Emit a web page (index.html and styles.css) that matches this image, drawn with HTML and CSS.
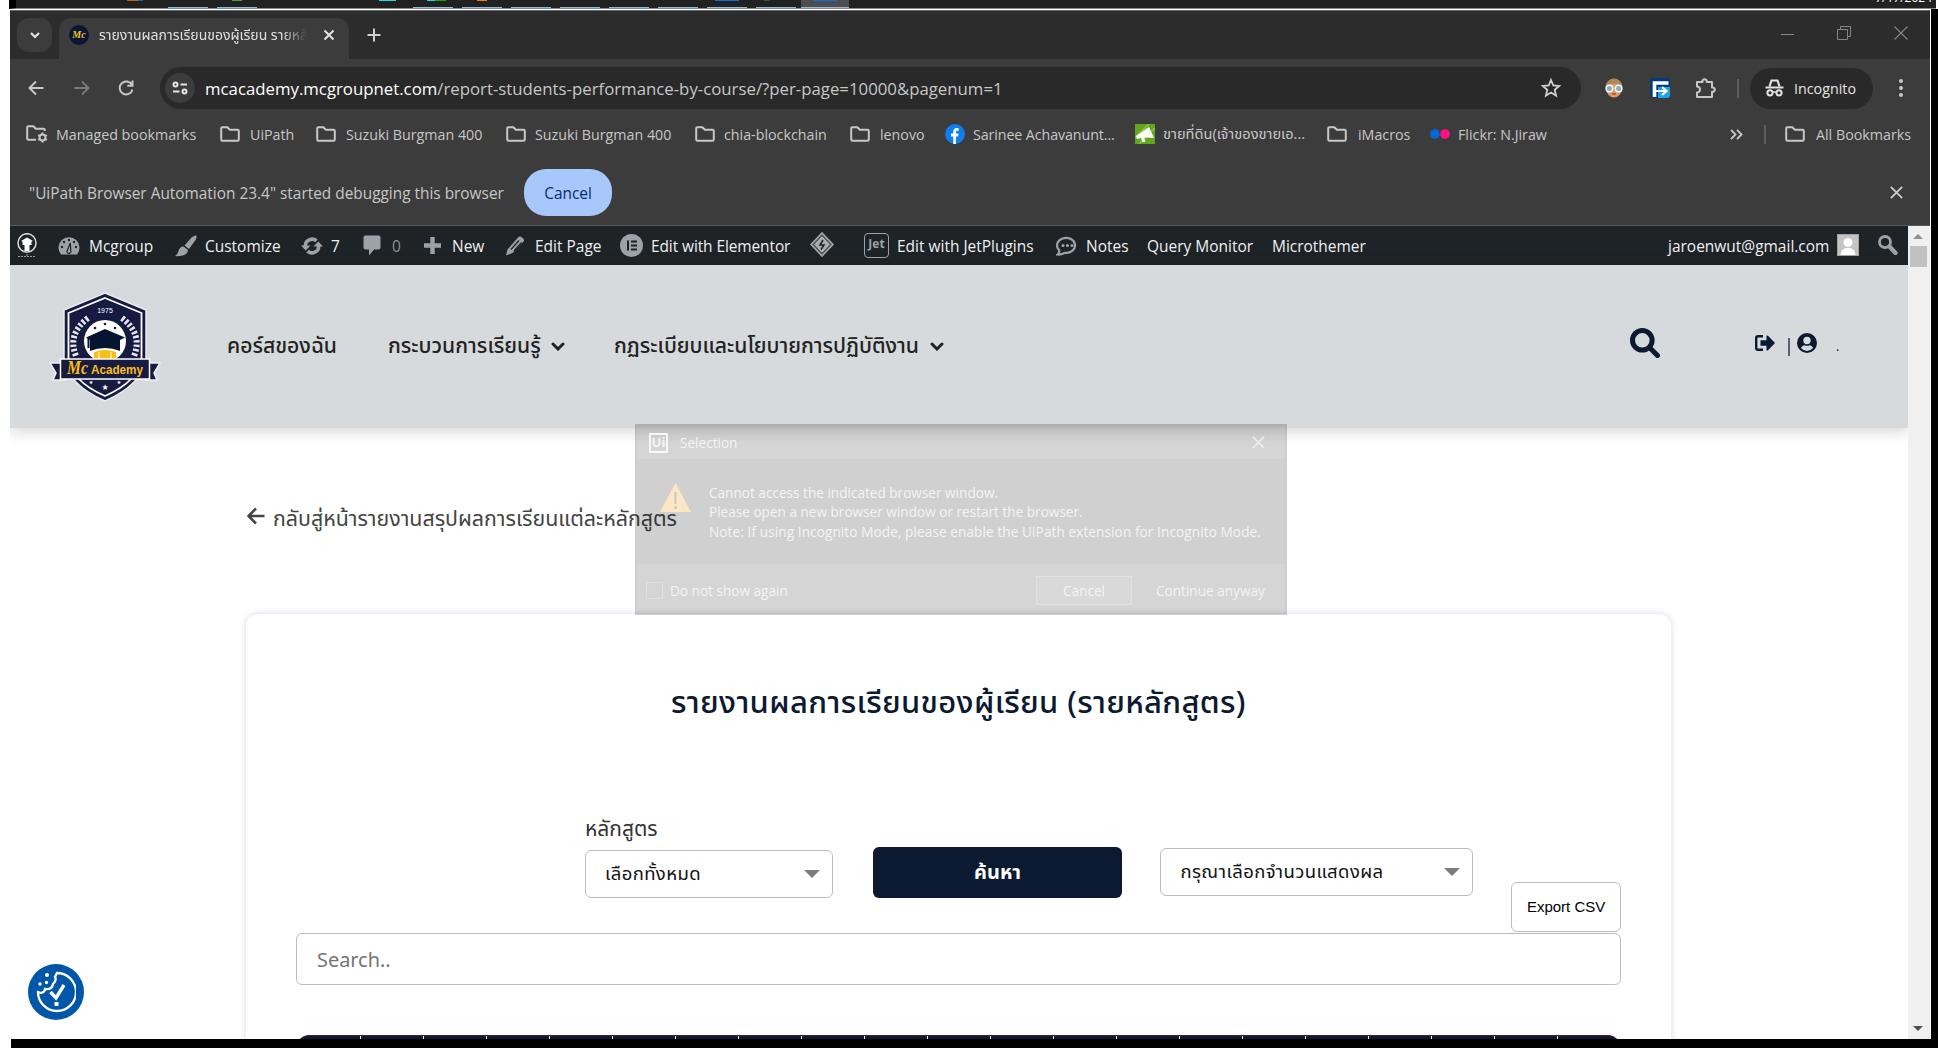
FILE: index.html
```
<!DOCTYPE html>
<html lang="th">
<head>
<meta charset="utf-8">
<title>รายงานผลการเรียนของผู้เรียน</title>
<link rel="stylesheet" href="styles.css">
</head>
<body>
<svg class="defs" width="0" height="0">
  <symbol id="folder" viewBox="0 0 20 16"><path d="M1.2 13.2V2.2Q1.2 1.2 2.2 1.2H7.4L9.8 3.8H17.6Q18.8 3.8 18.8 5V13.4Q18.8 14.8 17.6 14.8H2.4Q1.2 14.8 1.2 13.2Z" fill="none" stroke="#c7c7c7" stroke-width="2"/></symbol>
  <symbol id="caret" viewBox="0 0 14 9"><path d="M2 2 7 7l5-5" fill="none" stroke="#222" stroke-width="3" stroke-linecap="round"/></symbol>
</svg>
<div class="screen">
  <div class="taskbar">
    <i class="task" style="left:111px;width:11px;background:#b26b0c"></i><i class="task" style="left:122px;width:5px;background:#1a62b8"></i>
    <i class="task" style="left:216px;width:10px;background:#45a043"></i>
    <i class="task" style="left:363px;width:17px;background:#26d6e0"></i>
    <i class="task" style="left:411px;width:8px;background:#26d6e0"></i><i class="task" style="left:419px;width:11px;background:#16a516"></i>
    <i class="task" style="left:461px;width:10px;background:#ef7d16"></i>
    <i class="open" style="left:152px"></i><i class="open" style="left:201px"></i><i class="open" style="left:397px"></i><i class="open" style="left:446px"></i><i class="open" style="left:495px"></i><i class="open" style="left:544px"></i><i class="open" style="left:593px"></i><i class="open" style="left:642px"></i><i class="open" style="left:691px"></i><i class="open" style="left:740px"></i>
    <i class="open active" style="left:785px"></i>
    <i class="task" style="left:699px;width:24px;background:#0c6fe0"></i><i class="task" style="left:748px;width:6px;background:#2a5a2a"></i><i class="task" style="left:797px;width:24px;background:#0c6fe0"></i>
    <span class="date">7/17/2024</span>
  </div>
  <div class="main">
    <div class="window">
      <div class="tabs">
        <div class="tabmenu"><svg width="12" height="8" viewBox="0 0 12 8"><path d="M2 2l4 4 4-4" fill="none" stroke="#e3e3e3" stroke-width="2.200"/></svg></div>
        <div class="tab">
          <span class="fav"><b>Mc</b></span>
          <span class="tabtitle">รายงานผลการเรียนของผู้เรียน รายหลั</span>
          <svg width="12" height="12" viewBox="0 0 12 12"><path d="M1.500 1.500l9 9m0-9l-9 9" stroke="#e3e3e3" stroke-width="2"/></svg>
        </div>
        <svg class="plus" width="14" height="14" viewBox="0 0 14 14"><path d="M7 0.500v13M.5 7h13" stroke="#d0d0d0" stroke-width="2"/></svg>
        <div class="winctl">
          <svg width="14" height="14" viewBox="0 0 14 14"><path d="M1 8.500h13" stroke="#858585"/></svg>
          <svg width="14" height="14" viewBox="0 0 14 14"><path d="M.5 3.500h10v10h-10zM3.500 3V.5h10v10h-2.500" fill="none" stroke="#858585"/></svg>
          <svg width="14" height="14" viewBox="0 0 14 14"><path d="M.5.5l13 13m0-13l-13 13" stroke="#858585" stroke-width="1.100"/></svg>
        </div>
      </div>
      <div class="toolbar">
        <svg width="16" height="16" viewBox="0 0 16 16"><path d="M15.500 8H2M8 1.500 1.500 8 8 14.500" fill="none" stroke="#c7c7c7" stroke-width="2"/></svg>
        <svg width="16" height="16" viewBox="0 0 16 16"><path d="M.5 8H14M8 1.500 14.500 8 8 14.500" fill="none" stroke="#7c7c7c" stroke-width="1.800"/></svg>
        <svg width="16" height="16" viewBox="0 0 16 16"><path d="M14 5A6.500 6.500 0 1 0 14.500 9.500M14.500 0.500V5.800H9.300" fill="none" stroke="#c7c7c7" stroke-width="2"/></svg>
        <div class="omni">
          <span class="info"><svg width="16" height="14" viewBox="0 0 16 14"><g fill="none" stroke="#e3e3e3" stroke-width="2"><circle cx="3.500" cy="3.500" r="2"/><path d="M8.500 3.500H15M1 10.500h6.500"/><circle cx="12.500" cy="10.500" r="2"/></g></svg></span>
          <span class="url"><span class="host">mcacademy.mcgroupnet.com</span>/report-students-performance-by-course/?per-page=10000&amp;pagenum=1</span>
          <svg class="star" width="20" height="20" viewBox="0 0 20 20"><path d="M10 2l2.300 5.500 5.900.5-4.500 3.900 1.400 5.800L10 14.600l-5.100 3.100 1.400-5.800L1.800 8l5.900-.5z" fill="none" stroke="#d0d0d0" stroke-width="1.800"/></svg>
        </div>
        <svg width="20" height="20" viewBox="0 0 20 20"><ellipse cx="10" cy="10" rx="8" ry="9.500" fill="#dd9a6c"/><path d="M1.500 8A8.600 8.600 0 0 1 18.500 8Q13 5 10 6 7 5 1.500 8Z" fill="#ad8b56"/><circle cx="5.400" cy="10.500" r="3.300" fill="#7cb4bf" stroke="#f4f4f4" stroke-width="1.600"/><circle cx="14.600" cy="10.500" r="3.300" fill="#7cb4bf" stroke="#f4f4f4" stroke-width="1.600"/><path d="M8 16h4" stroke="#b5473c" stroke-width="1.500"/></svg>
        <svg width="20" height="20" viewBox="0 0 20 20"><rect width="20" height="20" rx="3" fill="#063a7a"/><path d="M8 9h12v8q0 3-3 3H8z" fill="#1da5ea"/><path d="M4.500 19V5h14" fill="none" stroke="#fff" stroke-width="3.600"/><path d="M6 13h9M12 9l4.500 4-4.500 4" fill="none" stroke="#fff" stroke-width="2.200"/></svg>
        <svg width="21" height="21" viewBox="0 0 21 21"><path d="M2 4h5.500a2.200 2.200 0 1 1 4.200 0H17v5.500a2.200 2.200 0 1 1 0 4.200V19H2v-4.500c4-.3 4-5.700 0-6z" fill="none" stroke="#c7c7c7" stroke-width="2" stroke-linejoin="round"/></svg>
        <i class="vr"></i>
        <div class="incog"><svg width="19" height="18" viewBox="0 0 19 18"><path d="M0.500 8.500h18" stroke="#e3e3e3" stroke-width="2"/><path d="M4.500 7.500 6.500 1.500h6l2 6" fill="none" stroke="#e3e3e3" stroke-width="2.200"/><circle cx="5" cy="13.800" r="2.600" fill="none" stroke="#e3e3e3" stroke-width="2"/><circle cx="14" cy="13.800" r="2.600" fill="none" stroke="#e3e3e3" stroke-width="2"/><path d="M7.500 13h4" stroke="#e3e3e3" stroke-width="1.500"/></svg><span>Incognito</span></div>
        <svg width="4" height="18" viewBox="0 0 4 18"><g fill="#c7c7c7"><circle cx="2" cy="2" r="2"/><circle cx="2" cy="9" r="2"/><circle cx="2" cy="16" r="2"/></g></svg>
      </div>
      <div class="bookmarks">
        <svg width="22" height="18" viewBox="0 0 22 18"><path d="M10 14.800H2.500Q1.200 14.800 1.200 13.500V2.200Q1.200 1.200 2.200 1.200H7.400L9.800 3.800H17.600Q18.800 3.800 18.800 6" fill="none" stroke="#c7c7c7" stroke-width="2"/><circle cx="16.500" cy="12.500" r="3" fill="none" stroke="#c7c7c7" stroke-width="2"/><path d="M16.500 7.500v2M16.500 15.500v2M12.200 10l1.700 1M19.100 14l1.700 1M12.200 15l1.700-1M19.100 11l1.700-1" stroke="#c7c7c7" stroke-width="2"/></svg><span>Managed bookmarks</span>
        <svg class="f"><use href="#folder"/></svg><span>UiPath</span>
        <svg class="f"><use href="#folder"/></svg><span>Suzuki Burgman 400</span>
        <svg class="f"><use href="#folder"/></svg><span>Suzuki Burgman 400</span>
        <svg class="f"><use href="#folder"/></svg><span>chia-blockchain</span>
        <svg class="f"><use href="#folder"/></svg><span>lenovo</span>
        <svg width="20" height="20" viewBox="0 0 20 20"><circle cx="10" cy="10" r="10" fill="#0f7ff0"/><path d="M8.300 20V12.500H6V9.600h2.300V7.600Q8.300 4 11.700 4q1.300 0 2 .2v2.500h-1.400q-1.300 0-1.300 1.400v1.500h2.600l-.5 2.900H11V20z" fill="#fff"/></svg><span class="tight">Sarinee Achavanunt...</span>
        <svg width="20" height="20" viewBox="0 0 20 20"><rect width="20" height="20" fill="#62a61f"/><path d="M0 14 14 0M4 20 20 4" stroke="#7fbf3c" stroke-width="2"/><path d="M14 3l5 11-7-.5-3 .3 1.500 4-3 .2-1.500-4-4 1-1-3z" fill="#fff"/></svg><span class="th">ขายที่ดิน(เจ้าของขายเอ...</span>
        <svg class="f"><use href="#folder"/></svg><span>iMacros</span>
        <svg width="20" height="10" viewBox="0 0 20 10"><circle cx="5" cy="5" r="4.800" fill="#0666dc"/><circle cx="15" cy="5" r="4.800" fill="#ff1283"/></svg><span>Flickr: N.Jiraw</span>
        <svg width="13" height="11" viewBox="0 0 13 11"><path d="M1 .8 5.500 5.500 1 10.200M7 .8l4.500 4.700L7 10.200" fill="none" stroke="#c7c7c7" stroke-width="1.900"/></svg>
        <i class="vr"></i>
        <svg class="f"><use href="#folder"/></svg><span>All Bookmarks</span>
      </div>
      <div class="infobar"><span>"UiPath Browser Automation 23.4" started debugging this browser</span><button class="cancel">Cancel</button><svg width="13" height="13" viewBox="0 0 13 13"><path d="M.8.8l11.400 11.400m0-11.400L.8 12.200" stroke="#d0d0d0" stroke-width="1.700"/></svg></div>
      <div class="viewport">
        <div class="page">
          <div class="admin">
            <svg width="20" height="26" viewBox="0 0 20 26"><ellipse cx="10" cy="10" rx="9" ry="9.300" fill="none" stroke="#ddd" stroke-width="1.500"/><path d="M4 8l6-3.500L16 8l-1.500.5V12h-2v6h-5v-6h-2V8.500z" fill="#fff"/><path d="M10 18v5M1 23.500h18" stroke="#999" stroke-dasharray="2 1"/></svg>
            <svg width="22" height="20" viewBox="0 0 22 20"><path d="M3 18.500A10.500 10.500 0 1 1 19 18.500Z" fill="#9ca2a7"/><g fill="#1d2327"><circle cx="11" cy="4" r="1.200"/><circle cx="6" cy="6" r="1.200"/><circle cx="4" cy="11" r="1.200"/><circle cx="18" cy="11" r="1.200"/><circle cx="16" cy="6" r="1.200"/></g><path d="M12.300 7 12.800 14.500a2 2 0 1 1-3.300-.5z" fill="none" stroke="#1d2327" stroke-width="1.200"/></svg><span>Mcgroup</span>
            <svg width="22" height="22" viewBox="0 0 22 22"><path d="M21 .5Q22.500 1.500 20.500 5L14 14 9.500 10.500 16.500 2.500Q20 0 21 .5ZM8.500 11.500l4.500 3.500Q12.500 19.500 7.500 20.500 3.500 21.500 0 21 3 19 3.500 16 4.500 11.500 8.500 11.500Z" fill="#9ca2a7"/></svg><span>Customize</span>
            <svg width="22" height="18" viewBox="0 0 22 18"><g fill="none" stroke="#9ca2a7" stroke-width="3.600"><path d="M4.300 9A6.700 6.700 0 0 1 15.500 3.900M17.700 9A6.700 6.700 0 0 1 6.500 14.100"/></g><path d="M0 8.500h9.500L4.700 13.500zM22 9.500h-9.500L17.300 4.500z" fill="#9ca2a7"/></svg><span>7</span>
            <svg width="18" height="21" viewBox="0 0 18 21"><path d="M2.500.5h13q2 0 2 2v10q0 2-2 2H11L6 20.500v-6H2.500q-2 0-2-2v-10q0-2 2-2Z" fill="#9ca2a7"/></svg><span class="dim">0</span>
            <svg width="17" height="17" viewBox="0 0 17 17"><path d="M8.500 0v17M0 8.500h17" stroke="#9ca2a7" stroke-width="4.400"/></svg><span>New</span>
            <svg width="19" height="20" viewBox="0 0 19 20"><path d="M0 19.500 1.500 13.500 12 1.500q2-2 4 0 3 2 1.500 4L6.500 17z" fill="#9ca2a7"/><path d="M5 13.500 13 4.500M8 15l7.500-8.500" stroke="#1d2327" stroke-width="1.200"/></svg><span>Edit Page</span>
            <svg width="23" height="23" viewBox="0 0 23 23"><circle cx="11.500" cy="11.500" r="11.500" fill="#9ca2a7"/><path d="M8 6.500v10M11 7.500h6M11 11.500h6M11 15.500h6" stroke="#1d2327" stroke-width="2"/></svg><span class="tight">Edit with Elementor</span>
            <svg class="up" width="24" height="25" viewBox="0 0 24 25"><path d="M12 1 23 12.500 12 24 1 12.500Z" fill="#555a60" stroke="#a7aaad" stroke-width="1.600"/><path d="M12 5 19 12.500 12 20 5 12.500Z" fill="#a7aaad" stroke="#c3c4c7"/><path d="M13 8l-3 5h4l-3 4.500" fill="none" stroke="#1d2327" stroke-width="1.500"/></svg>
            <span class="jet">Jet</span><span>Edit with JetPlugins</span>
            <svg width="22" height="20" viewBox="0 0 22 20"><path d="M1.500 18.500Q4 16.500 3 14A9 7.500 0 1 1 9 16.800Q5 19 1.500 18.500Z" fill="none" stroke="#9ca2a7" stroke-width="2.200"/><g fill="#9ca2a7"><circle cx="7" cy="9.500" r="1.500"/><circle cx="11.500" cy="9.500" r="1.500"/><circle cx="16" cy="9.500" r="1.500"/></g></svg><span>Notes</span>
            <span>Query Monitor</span><span>Microthemer</span><span>jaroenwut@gmail.com</span>
            <svg class="up" width="22" height="22" viewBox="0 0 22 22"><rect x=".5" y=".5" width="21" height="21" fill="#c3c3c3" stroke="#a2a2a2"/><circle cx="11" cy="8.500" r="4.500" fill="#fff"/><path d="M3.500 21Q4 15 9 14h4q5 1 5.500 7z" fill="#fff"/></svg>
            <svg class="up" width="20" height="20" viewBox="0 0 20 20"><circle cx="7" cy="7" r="5.500" fill="none" stroke="#9ca2a7" stroke-width="2.800"/><path d="M11.500 11.500l6 6.500" stroke="#9ca2a7" stroke-width="4.400" stroke-linecap="round"/></svg>
          </div>
          <div class="header">
            <svg class="crest" width="112" height="110" viewBox="0 0 112 110">
              <path d="M56 1 97 18V66Q94 92 56 109 18 92 15 66V18Z" fill="#171b42" stroke="#e9ecef" stroke-width="1.500"/>
              <path d="M56 6 92.500 21V66Q90 89 56 104 22 89 19.500 66V21Z" fill="none" stroke="#fff" stroke-width="1.800"/>
              <path d="M39 26Q18 42 27 64M73 26Q94 42 85 64" fill="none" stroke="#e8e8ee" stroke-width="6" stroke-dasharray="2.500 2"/>
              <circle cx="56" cy="49" r="21" fill="#fff"/>
              <g fill="#171b42"><circle cx="56" cy="32" r="1.300"/><circle cx="46" cy="36" r="1.300"/><circle cx="66" cy="36" r="1.300"/></g>
              <path d="M45 60Q56 56 67 60V68H45Z" fill="#fbbe12"/><path d="M50 60v8M62 60v8" stroke="#fff"/>
              <path d="M56 37 76 45.500 71 48V59Q56 53 41 59V48L37 45.500Z" fill="#06152f"/><path d="M39.500 46v10" stroke="#06152f" stroke-width="2"/>
              <path d="M1 71H16V88H4L7 81ZM111 71H96V88H108L105 81Z" fill="#171b42" stroke="#eef0f2" stroke-width="1.500"/>
              <rect x="11.500" y="67" width="89" height="20" fill="#171b42" stroke="#fff" stroke-width="1.500"/>
              <text x="56" y="21" class="yr">1975</text><text x="18" y="82" class="mc" textLength="21" lengthAdjust="spacingAndGlyphs">Mc</text><text x="42" y="81.500" class="ac" textLength="52" lengthAdjust="spacingAndGlyphs">Academy</text>
              <text x="56" y="98" class="st">★</text><text x="42" y="92" class="st s">★</text><text x="70" y="92" class="st s">★</text>
            </svg>
            <span>คอร์สของฉัน</span>
            <span>กระบวนการเรียนรู้</span><svg class="c"><use href="#caret"/></svg>
            <span>กฏระเบียบและนโยบายการปฏิบัติงาน</span><svg class="c"><use href="#caret"/></svg>
            <svg class="raise" width="30" height="30" viewBox="0 0 30 30"><circle cx="12.300" cy="12.300" r="9.800" fill="none" stroke="#0b1931" stroke-width="5"/><path d="M19.500 19.500l8 8" stroke="#0b1931" stroke-width="5" stroke-linecap="round"/></svg>
            <svg class="raise" width="20" height="16" viewBox="0 0 20 16"><path d="M8 1.300H3Q1.200 1.300 1.200 3V13Q1.200 14.700 3 14.700H8" fill="none" stroke="#0b1931" stroke-width="2.400"/><path d="M5.500 5.200H11.500V.8Q12 0 13 .8L20 8 13 15.200Q12 16 11.500 15.200V10.800H5.500Z" fill="#0b1931"/></svg>
            <i class="bar"></i>
            <svg class="raise" width="20" height="20" viewBox="0 0 20 20"><circle cx="10" cy="10" r="10" fill="#0b1931"/><circle cx="10" cy="7.500" r="3.700" fill="#d6dadd"/><path d="M3.800 15Q6 12 7.500 12.300q2.500 1 5 0Q14.500 12 16.200 15 10 21 3.800 15Z" fill="#d6dadd"/></svg>
            <span class="dot">.</span>
          </div>
          <div class="back"><svg width="18" height="18" viewBox="0 0 18 18"><path d="M17.500 9H2M9 1.500 1.500 9 9 16.500" fill="none" stroke="#444" stroke-width="2.600"/></svg><span>กลับสู่หน้ารายงานสรุปผลการเรียนแต่ละหลักสูตร</span></div>
          <div class="card">
            <h1>รายงานผลการเรียนของผู้เรียน (รายหลักสูตร)</h1>
            <div class="form">
              <div class="field"><label>หลักสูตร</label><div class="select"><span>เลือกทั้งหมด</span><i></i></div></div>
              <button class="go">ค้นหา</button>
              <div class="select wide"><span>กรุณาเลือกจำนวนแสดงผล</span><i></i></div>
              <button class="csv">Export CSV</button>
            </div>
            <div class="search">Search..</div>
            <div class="thead"></div>
          </div>
          <div class="cookie"><svg width="40" height="44" viewBox="0 0 40 44"><g fill="none" stroke="#fff" stroke-width="2.300"><path d="M21 3A19 19 0 1 1 2 22L5 23Q9 22 9 19 16 20 17 14 21 10 19 7Z"/><path d="M14.500 22l5.500 6 8-13" stroke-width="3.400"/></g><path d="M18.500 32h4v4h-4z" fill="#fff"/><g fill="#fff"><circle cx="11" cy="5" r="2"/><circle cx="4" cy="14" r="1.700"/><circle cx="10.500" cy="12.500" r="1.700"/></g></svg></div>
        </div>
        <div class="scroll"><i class="ua"></i><i class="thumb"></i><i class="da"></i></div>
      </div>
      <div class="dialog">
        <div class="dt"><span class="ui">Ui</span><span>Selection</span><svg width="13" height="13" viewBox="0 0 13 13"><path d="M.8.8l11.400 11.400m0-11.400L.8 12.200" stroke="#f0f0f0" stroke-width="1.400"/></svg></div>
        <div class="db"><svg width="31" height="29" viewBox="0 0 31 29"><path d="M15.500 0 31 29H0Z" fill="#fbe7c4"/><path d="M15.500 9v12M15.500 23v3" stroke="#c9c7c2" stroke-width="2"/></svg><p>Cannot access the indicated browser window.<br>Please open a new browser window or restart the browser.<br><span class="hint">Note: If using Incognito Mode, please enable the UiPath extension for Incognito Mode.</span></p></div>
        <div class="df"><i class="box"></i><span>Do not show again</span><span class="btn">Cancel</span><span>Continue anyway</span></div>
      </div>
    </div>
    <div class="edge"></div>
  </div>
  <div class="bottom"></div>
</div>
</body>
</html>
```
FILE: styles.css
```
* { box-sizing: border-box; }
body { margin: 0; background: #fff; font-family: "Open Sans", "Noto Sans Thai", "Noto Sans", sans-serif; }
svg { display: block; flex: none; }
button { font: inherit; border: 0; padding: 0; }
span { white-space: nowrap; }
.defs { position: absolute; }
.screen { width: 1938px; height: 1048px; overflow: hidden; display: flex; flex-direction: column; }
.taskbar { position: relative; height: 9px; margin-left: 9px; margin-right: 2px; border-left: 7px solid #000; background: #212121; border-bottom: 1px solid #8a8a8a; overflow: hidden; flex: none; }
.task, .open { position: absolute; top: 0; height: 1px; }
.open { top: 7px; width: 40px; background: #8dbbe2; }
.open.active { top: 0; width: 48px; height: 8px; background: #4d4d4d; border-bottom: 1px solid #8dbbe2; }
.date { position: absolute; right: 4px; top: -10px; font-size: 12px; line-height: 16px; color: #fff; }
.main { display: flex; height: 1030px; flex: none; padding-left: 10px; }
.window { position: relative; width: 1920px; display: flex; flex-direction: column; border-top: 1px solid #fff; }
.edge { width: 7px; margin-left: 1px; background: #000; }
.bottom { height: 9px; margin-left: 11px; background: #000; }

.tabs { height: 49px; background: #2c2c2c; border-top: 1px solid #686868; display: flex; padding: 7px 22px 0 7px; flex: none; }
.tabmenu { width: 35px; height: 34px; border-radius: 12px; background: #3c3c3c; display: grid; place-items: center; }
.tab { width: 290px; margin-left: 7px; background: #3c3c3c; border-radius: 12px 12px 0 0; display: flex; align-items: center; padding: 0 14px 7px 10px; }
.fav { width: 20px; height: 20px; border-radius: 50%; background: #0a1636; color: #f2c21c; font: italic bold 10px/20px "Liberation Serif", serif; text-align: center; margin-right: 10px; }
.tabtitle { width: 209px; height: 24px; line-height: 24px; font-size: 14px; color: #e0e0e0; overflow: hidden; margin-right: 16px; -webkit-mask-image: linear-gradient(90deg, #000 88%, transparent); mask-image: linear-gradient(90deg, #000 88%, transparent); }
.plus { margin: 10px 0 0 18px; }
.winctl { margin: 8px 0 0 auto; display: flex; gap: 43px; }

.toolbar { height: 50px; padding-top: 8px; background: #3c3c3c; display: grid; flex: none; align-items: center; padding-left: 18px; grid-template-columns: 46px 44px 42px 1444px 46px 45px 42px 13px 149px 1fr; }
.omni { width: 1421px; height: 42px; border-radius: 21px; background: #292929; display: flex; align-items: center; padding: 0 20px 0 5px; color: #c7c7c7; font-size: 16.800px; }
.info { width: 30px; height: 30px; border-radius: 50%; background: #3c3c3c; display: grid; place-items: center; margin-right: 10px; }
.host { color: #fff; }
.star { margin-left: auto; }
.vr { width: 2px; height: 19px; background: #5e5e5e; }
.incog { width: 123px; height: 41px; border-radius: 21px; background: #292929; display: flex; align-items: center; gap: 10px; padding-left: 15px; color: #e3e3e3; font-size: 14.300px; }

.bookmarks { height: 50px; background: #3c3c3c; display: grid; align-items: center; padding-left: 16px; color: #c7c7c7; font-size: 14.280px; flex: none; grid-template-columns: 30px 164px 30px 66px 30px 160px 29px 160px 29px 126px 30px 65px 28px 162px 28px 164px 31px 72px 28px 272px 34px 21px 31px 1fr; }
.bookmarks .tight { letter-spacing: -.1px; }
.bookmarks .th { font-size: 14.600px; }
.f { width: 20px; height: 16px; }
.infobar { height: 67px; background: #3c3c3c; border-bottom: 1px solid #5a5a5a; display: grid; align-items: center; padding: 1px 0 0 19px; grid-template-columns: 495px 1366px 1fr; color: #c7c7c7; font-size: 15.400px; flex: none; }
.infobar span { padding-top: 2px; }
.cancel { width: 88px; height: 47px; padding-top: 1px; border-radius: 22px; background: #a8c7fa; color: #062e6f; font-weight: 500; }

.viewport { display: grid; grid-template-columns: 1898px 22px; height: 813px; overflow: hidden; }
.page { position: relative; height: 813px; overflow: hidden; background: #fff; font-family: "Noto Sans Thai", "Noto Sans", sans-serif; }
.admin { height: 39px; background: #1d2327; color: #f0f0f1; font-family: "Open Sans", sans-serif; font-size: 15.480px; display: grid; align-items: center; padding-left: 7px; grid-template-columns: 41px 31px 86px 30px 96px 30px 32px 29px 32px 28px 54px 29px 85px 31px 159px 54px 33px 159px 30px 61px 125px 396px 169px 41px 1fr; }
.admin .tight { letter-spacing: -.1px; }
.admin .up { margin-bottom: 2px; }
.dim { color: #8c9196; }
.jet { width: 25px; height: 25px; border: 1.500px solid #9ca2a7; border-radius: 4px; color: #9ca2a7; font-size: 12px; font-weight: 700; line-height: 20px; text-align: center; }
.header { height: 163px; background: #d6dadd; box-shadow: 0 3px 14px rgba(0,0,0,.18); display: grid; align-items: center; padding-left: 39px; color: #222; font-size: 21.150px; font-weight: 500; grid-template-columns: 178px 161px 163px 63px 316px 700px 125px 33px 9px 39px 1fr; }
.yr { font: 7px "Liberation Sans", sans-serif; fill: #fff; text-anchor: middle; }
.mc { font: italic bold 18px "Liberation Serif", serif; fill: #fbbe12; }
.ac { font: bold 13px "Liberation Sans", sans-serif; fill: #fbbe12; }
.st { font-size: 8px; fill: #fff; text-anchor: middle; font-family: "DejaVu Sans", sans-serif; }
.st.s { font-size: 5px; }
.c { width: 14px; height: 9px; }
.raise { margin-bottom: 7px; }
.bar { width: 2px; height: 18px; background: #5a6172; }
.dot { font-size: 12px; }
.back { display: grid; grid-template-columns: 26px 1fr; align-items: center; height: 40px; margin: 68px 0 0 237px; color: #444; font-size: 21.360px; }
.back span { padding-top: 7px; }
.card { margin: 78px 0 0 236px; width: 1425px; height: 500px; border-radius: 12px; box-shadow: 0 0 6px rgba(90,90,170,.25); background: #fff; padding: 0 50px; display: flex; flex-direction: column; }
h1 { margin: 62px 0 0; height: 54px; line-height: 56px; font-size: 31px; letter-spacing: .35px; font-weight: 500; color: #0b1931; text-align: center; white-space: nowrap; }
.form { height: 203px; display: flex; align-items: flex-start; padding-left: 289px; color: #111; }
.field { margin-top: 80px; width: 248px; }
label { display: block; height: 40px; line-height: 40px; font-size: 21px; color: #333; }
.select { height: 48px; border: 1px solid #bcbcbc; border-radius: 6px; display: flex; align-items: center; justify-content: space-between; padding: 0 12px 0 19px; font-size: 18.500px; letter-spacing: .4px; }
.select i { border: 8px solid transparent; border-top-color: #7b7d80; border-bottom: 0; }
.go { width: 250px; height: 51px; margin: 117px 0 0 40px; background: #0b1931; border-radius: 6px; color: #fff; font-size: 20px; font-weight: 700; }
.wide { width: 313px; margin: 118px 0 0 38px; }
.csv { width: 110px; height: 50px; margin: 152px 0 0 38px; padding-bottom: 2px; border: 1px solid #bcbcbc; border-radius: 6px; background: #fff; font: 15px "Liberation Sans", sans-serif; color: #000; }
.search { height: 52px; border: 1px solid #bcbcbc; border-radius: 6px; line-height: 54px; padding-left: 20px; color: #757575; font-size: 19.900px; }
.thead { height: 20px; margin: 50px 1px 0; border-radius: 12px 12px 0 0; border-top: 1px solid #4a1f22; background: repeating-linear-gradient(90deg, transparent 0 61px, #e8e8e8 61px 62px, transparent 62px 63px) 2px 0 / 1263px 100% no-repeat #0b1931; }
.cookie { position: absolute; left: 18px; top: 738px; width: 56px; height: 56px; border-radius: 50%; background: #0056a8; display: grid; place-items: center; }
.scroll { background: #f0f0f0; display: flex; flex-direction: column; align-items: center; padding: 8px 2px 8px 0; }
.ua { border: 5px solid transparent; border-bottom-color: #8f8f8f; border-top: 0; }
.thumb { width: 17px; height: 21px; margin-top: 7px; background: #c1c1c1; }
.da { border: 5px solid transparent; border-top-color: #505050; border-bottom: 0; margin-top: auto; }

.dialog { position: absolute; left: 625px; top: 414px; width: 652px; height: 191px; color: #f4f4f4; font-size: 13.600px; background: rgba(0,0,0,.165); border: 2px solid rgba(0,0,0,.03); display: flex; flex-direction: column; }
.dt { height: 33px; display: grid; grid-template-columns: 31px 572px 1fr; align-items: center; padding-left: 12px; }
.ui { width: 19px; height: 20px; border: 2px solid #f7f7f7; font-size: 13px; line-height: 15px; font-weight: 700; text-align: center; }
.db { height: 105px; background: rgba(0,0,0,.025); display: grid; grid-template-columns: 49px 1fr; align-items: start; padding: 24px 0 0 23px; }
.db p { margin: 0; line-height: 19.300px; }
.hint { letter-spacing: .09px; }
.df { flex: 1; display: grid; grid-template-columns: 24px 366px 120px 1fr; align-items: center; padding: 3px 0 0 9px; }
.box { width: 17px; height: 17px; border: 1px solid #e0e0e0; }
.btn { width: 96px; height: 29px; border: 1px solid #e2e2e2; display: grid; place-items: center; background: rgba(255,255,255,.1); }
```
